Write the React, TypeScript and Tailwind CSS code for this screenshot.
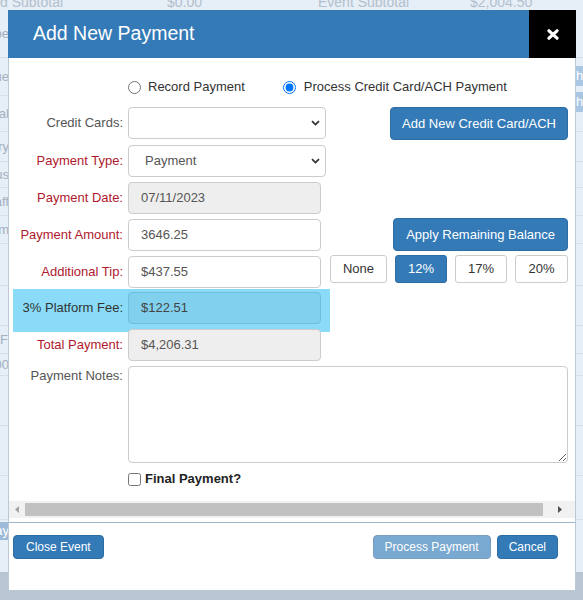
import React from "react";

const labelRed = "text-[#af192d]";

function Chevron() {
  return (
    <svg width="9" height="6" viewBox="0 0 9 6" className="block">
      <path d="M1 1.2 L4.5 4.6 L8 1.2" fill="none" stroke="#333" strokeWidth="1.8" />
    </svg>
  );
}

function Select({ value }: { value?: string }) {
  return (
    <div className="relative w-[198px] h-[32px]">
      <div className="w-full h-full rounded-[4px] border border-[#ccc] bg-white pl-[16px] leading-[30px] text-[13px] text-[#555]">
        {value}
      </div>
      <div className="absolute right-[6px] top-[13px]">
        <Chevron />
      </div>
    </div>
  );
}

function Field({ value, tone }: { value: string; tone: "plain" | "gray" | "fee" }) {
  const cls =
    tone === "gray"
      ? "bg-[#eeeeee] border-[#ccc] text-[#555]"
      : tone === "fee"
      ? "bg-[#80d0ee] border-[#6fbddb] text-[#444]"
      : "bg-white border-[#ccc] text-[#555]";
  return (
    <div className={`w-[193px] h-[32px] rounded-[4px] border px-[12px] leading-[30px] text-[13px] ${cls}`}>
      {value}
    </div>
  );
}

function Row({
  label,
  tone,
  children,
  className = "",
}: {
  label: string;
  tone: string;
  children: React.ReactNode;
  className?: string;
}) {
  return (
    <div className={`flex items-start ${className}`}>
      <div className={`w-[110px] shrink-0 text-right leading-[32px] text-[13px] ${tone}`}>{label}</div>
      <div className="ml-[5px] flex flex-1 items-start">{children}</div>
    </div>
  );
}

function BlueButton({ children, className = "" }: { children: React.ReactNode; className?: string }) {
  return (
    <button className={`rounded-[4px] border border-[#2e6da4] bg-[#337ab7] text-white ${className}`}>{children}</button>
  );
}

function TipButton({ children, active = false, w }: { children: React.ReactNode; active?: boolean; w: string }) {
  return (
    <button
      className={`h-[28px] rounded-[3px] border text-[13px] ${w} ${
        active ? "border-[#2e6da4] bg-[#337ab7] text-white" : "border-[#ccc] bg-white text-[#333]"
      }`}
    >
      {children}
    </button>
  );
}

function EdgeWord({ word, h, lead = false }: { word: string; h: string; lead?: boolean }) {
  return (
    <div className={`flex items-center border-b border-[#d5e0ec] ${h}`}>
      <div className={`flex w-[9px] overflow-hidden whitespace-nowrap ${lead ? "justify-start" : "justify-end"}`}>
        {word}
      </div>
    </div>
  );
}

export default function App() {
  return (
    <div className="relative w-[583px] h-[600px] overflow-hidden bg-[#e6eef8] font-['Liberation_Sans',Arial,sans-serif]">
      {/* page behind the dialog */}
      <div className="flex flex-col text-[13px] text-[#a3b0be]">
        <div className="-mt-[6px] grid h-[16px] grid-cols-[167px_151px_152px_1fr] items-center text-[14px] leading-[16px] text-[#b3bfcb]">
          <span>d Subtotal</span>
          <span>$0.00</span>
          <span>Event Subtotal</span>
          <span>$2,004.50</span>
        </div>
        <EdgeWord word="Type" h="h-[48px]" />
        <EdgeWord word="Due" h="h-[38px]" />
        <EdgeWord word="Total" h="h-[36px]" />
        <EdgeWord word="Summary" h="h-[30px]" />
        <EdgeWord word="Status" h="h-[26px]" />
        <EdgeWord word="Staff" h="h-[28px]" />
        <EdgeWord word="Form" h="h-[28px]" />
        <EdgeWord word="" h="h-[42px]" />
        <EdgeWord word="" h="h-[40px]" />
        <EdgeWord word="F" h="h-[28px]" lead />
        <EdgeWord word="$0.00" h="h-[22px]" />
        <EdgeWord word="" h="h-[50px]" />
        <EdgeWord word="" h="h-[50px]" />
        <EdgeWord word="" h="h-[44px]" />
        <div className="flex h-[22px] items-center">
          <div className="flex h-[18px] w-[9px] items-center justify-end overflow-hidden whitespace-nowrap bg-[#9dbbd9] text-white">
            Pay
          </div>
        </div>
        <div className="h-[30px]" />
        <div className="h-[60px] bg-[#b8c6d3]" />
      </div>

      {/* right edge of the page: row buttons */}
      <div className="absolute right-0 top-[66px] flex w-[7px] flex-col gap-[6px]">
        <div className="h-[20px] overflow-hidden bg-[#a9c6e2] text-[13px] leading-[20px] text-white">h</div>
        <div className="h-[20px] overflow-hidden bg-[#a9c6e2] text-[13px] leading-[20px] text-white">h</div>
      </div>

      {/* dialog */}
      <div className="absolute left-[8px] top-[10px] flex h-[581px] w-[568px] flex-col border border-t-0 border-[#bcc8d3] bg-white">
        <div className="-mx-[1px] flex h-[48px] shrink-0 items-center bg-[#337ab7]">
          <div className="pl-[25px] text-[19.5px] text-white">Add New Payment</div>
          <div className="ml-auto flex h-full w-[47px] items-center justify-center bg-black">
            <svg width="12" height="11" viewBox="0 0 12 11">
              <path d="M2 1.8 L10 9.2 M10 1.8 L2 9.2" stroke="#fff" strokeWidth="3.2" strokeLinecap="round" />
            </svg>
          </div>
        </div>

        <div className="flex flex-col pl-[4px] pr-[7px] pt-[19px]">
          {/* payment mode */}
          <div className="ml-[115px] flex h-[20px] items-center text-[13px] text-[#333]">
            <input type="radio" name="mode" className="h-[13px] w-[13px]" />
            <span className="ml-[7px]">Record Payment</span>
            <input type="radio" name="mode" defaultChecked className="ml-[38px] h-[13px] w-[13px]" />
            <span className="ml-[8px]">Process Credit Card/ACH Payment</span>
          </div>

          <Row label="Credit Cards:" tone="text-[#555]" className="mt-[10px]">
            <Select />
            <BlueButton className="ml-auto h-[33px] px-[11px] text-[13px]">Add New Credit Card/ACH</BlueButton>
          </Row>

          <Row label="Payment Type:" tone={labelRed} className="mt-[5px]">
            <Select value="Payment" />
          </Row>

          <Row label="Payment Date:" tone={labelRed} className="mt-[5px]">
            <Field value="07/11/2023" tone="gray" />
          </Row>

          <Row label="Payment Amount:" tone={labelRed} className="mt-[5px]">
            <Field value="3646.25" tone="plain" />
            <BlueButton className="-mt-[1px] ml-auto h-[33px] px-[12px] text-[13px]">Apply Remaining Balance</BlueButton>
          </Row>

          <Row label="Additional Tip:" tone={labelRed} className="mt-[5px]">
            <Field value="$437.55" tone="plain" />
            <div className="-mt-[1px] ml-auto flex gap-[8px]">
              <TipButton w="w-[57px]">None</TipButton>
              <TipButton w="w-[52px]" active>
                12%
              </TipButton>
              <TipButton w="w-[52px]">17%</TipButton>
              <TipButton w="w-[53px]">20%</TipButton>
            </div>
          </Row>

          <div className="mt-[1px] w-[317px] bg-[#89dbf8] pb-[8px] pt-[3px]">
            <Row label="3% Platform Fee:" tone="text-[#333]">
              <Field value="$122.51" tone="fee" />
            </Row>
          </div>

          <Row label="Total Payment:" tone={labelRed} className="-mt-[3px]">
            <Field value="$4,206.31" tone="gray" />
          </Row>

          <div className="mt-[5px] flex items-start">
            <div className="w-[110px] shrink-0 text-right text-[13px] leading-[20px] text-[#555]">Payment Notes:</div>
            <textarea className="ml-[5px] h-[97px] w-[444px] rounded-[4px] border border-[#ccc] bg-white" />
          </div>

          <div className="ml-[115px] mt-[8px] flex h-[16px] items-center">
            <input type="checkbox" className="h-[13px] w-[13px]" />
            <span className="ml-[4px] text-[13px] font-bold text-[#222]">Final Payment?</span>
          </div>
        </div>

        {/* horizontal scroller */}
        <div className="mt-[14px] flex h-[17px] items-center bg-[#f1f1f1]">
          <div className="flex w-[16px] justify-center">
            <svg width="4" height="7" viewBox="0 0 4 7">
              <path d="M4 0 L0 3.5 L4 7 Z" fill="#a3a3a3" />
            </svg>
          </div>
          <div className="h-[13px] w-[518px] bg-[#c1c1c1]" />
          <div className="flex flex-1 justify-center pl-[2px]">
            <svg width="4" height="7" viewBox="0 0 4 7">
              <path d="M0 0 L4 3.5 L0 7 Z" fill="#505050" />
            </svg>
          </div>
        </div>

        {/* footer */}
        <div className="mt-[4px] flex border-t border-[#9fb4c9] pl-[4px] pr-[17px] pt-[12px]">
          <BlueButton className="h-[24px] px-[12px] text-[12px]">Close Event</BlueButton>
          <BlueButton className="ml-auto h-[24px] px-[11px] text-[12px] opacity-65">Process Payment</BlueButton>
          <BlueButton className="ml-[6px] h-[24px] px-[11px] text-[12px]">Cancel</BlueButton>
        </div>
      </div>
    </div>
  );
}
